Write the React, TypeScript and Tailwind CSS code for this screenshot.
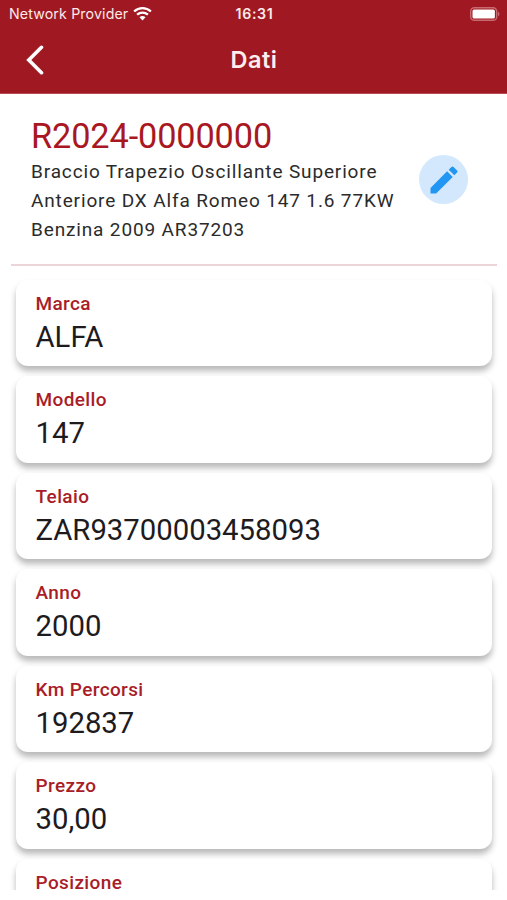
const fields = [
  { label: 'Marca', value: 'ALFA' },
  { label: 'Modello', value: '147' },
  { label: 'Telaio', value: 'ZAR93700003458093' },
  { label: 'Anno', value: '2000' },
  { label: 'Km Percorsi', value: '192837' },
  { label: 'Prezzo', value: '30,00' },
  { label: 'Posizione', value: '' },
];

function StatusBar() {
  return (
    <div className="grid h-[27px] grid-cols-[1fr_auto_1fr] items-center pl-[9px] pr-[7px] font-[Inter,sans-serif] text-[#fbe9ea]">
      <div className="flex items-center gap-[5px]">
        <span className="whitespace-nowrap text-[14.2px] leading-[28px] tracking-[0.14px]">Network Provider</span>
        <svg className="-mt-[2px]" width="19" height="15" viewBox="0 0 19 15" fill="none" stroke="white" strokeWidth="2.3">
          <path d="M1.1 5.5C6 .9 13 .9 17.9 5.5" />
          <path d="M4.1 8.7c3.1-2.9 7.7-2.9 10.8 0" />
          <path d="M9.5 14.4 6.5 11.3c1.7-1.6 4.3-1.6 6 0Z" fill="white" stroke="none" />
        </svg>
      </div>
      <span className="text-[14.2px] font-semibold leading-[28px] tracking-[0.65px]">16:31</span>
      <svg className="justify-self-end" width="30" height="14" viewBox="0 0 30 14">
        <rect x=".7" y=".7" width="26" height="12.6" rx="3.6" fill="none" stroke="#c96a71" strokeWidth="1.4" />
        <rect x="2.5" y="2.5" width="22.4" height="9" rx="1.6" fill="white" />
        <path d="M28 4.8c2 .8 2 3.6 0 4.4Z" fill="#c96a71" />
      </svg>
    </div>
  );
}

export default function App() {
  return (
    <div className="flex h-[900px] w-[507px] flex-col overflow-hidden bg-white font-[Roboto,sans-serif]">
      <header className="h-[94px] shrink-0 border-b border-[#b84b52] bg-[#a01922]">
        <StatusBar />
        <div className="grid h-[66px] grid-cols-[1fr_auto_1fr] items-center pl-[25px] pr-[24px]">
          <svg width="20" height="30" viewBox="0 0 20 30" fill="none" stroke="white" strokeWidth="3.6" strokeLinecap="round" strokeLinejoin="miter">
            <path d="M16.5 2.3 3.8 15l12.7 12.7" />
          </svg>
          <h1 className="font-[Inter,sans-serif] text-[23.5px] font-semibold leading-[30px] tracking-[0.5px] text-[#fdeeee]">Dati</h1>
        </div>
      </header>

      <section className="ml-[11px] mr-[10px] flex h-[171.5px] shrink-0 justify-between border-b-2 border-[#ecd6d9] pl-[20px] pr-[29px] pt-[21px]">
        <div>
          <h2 className="whitespace-nowrap text-[34.3px] leading-[42px] tracking-[-0.12px] text-[#a91822]">R2024-0000000</h2>
          <p className="whitespace-nowrap text-[19px] leading-[29.1px] tracking-[0.86px] text-[#2b2b2b]">
            Braccio Trapezio Oscillante Superiore<br />
            Anteriore DX Alfa Romeo 147 1.6 77KW<br />
            Benzina 2009 AR37203
          </p>
        </div>
        <button className="mt-[40px] flex size-[49px] shrink-0 items-center justify-center rounded-full bg-[#d3e8fd]" aria-label="Modifica">
          <svg width="36" height="36" viewBox="0 0 24 24" fill="#2196f3">
            <path d="M3 17.25V21h3.75L17.81 9.94l-3.75-3.75L3 17.25zM20.71 7.04c.39-.39.39-1.02 0-1.41l-2.34-2.34a.9959.9959 0 0 0-1.41 0l-1.83 1.83 3.75 3.75 1.83-1.83z" />
          </svg>
        </button>
      </section>

      <main className="flex h-[624.5px] shrink-0 flex-col gap-[10px] overflow-hidden px-[15.5px] pt-[14px]">
        {fields.map(({ label, value }) => (
          <article key={label} className="h-[86.55px] shrink-0 rounded-[12px] bg-white px-[20px] pt-[12px] shadow-[0_5px_6px_rgba(0,0,0,0.28)]">
            <div className="text-[19px] font-medium leading-[23px] tracking-[0.38px] text-[#a91d28]">{label}</div>
            <div className="mt-[4px] text-[29.3px] leading-[36px] text-[#1d1b1e]">{value}</div>
          </article>
        ))}
      </main>
    </div>
  );
}
